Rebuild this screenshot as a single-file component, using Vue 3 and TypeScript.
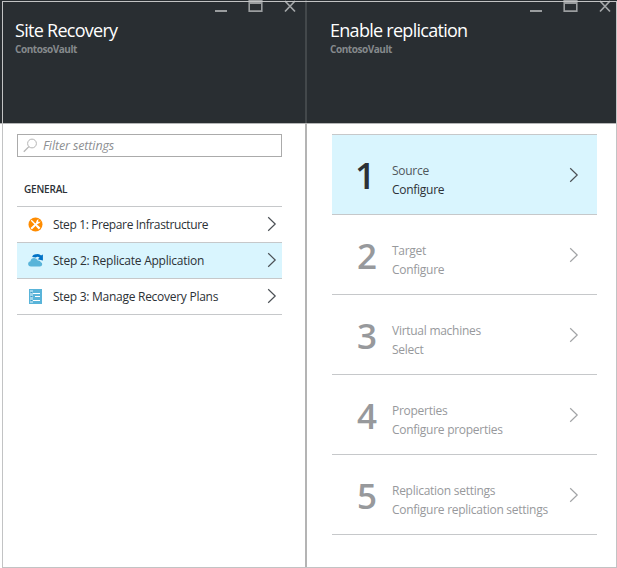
<script setup lang="ts">
interface Setting {
  id: string
  label: string
  icon: 'tools' | 'cloud' | 'plan'
  selected: boolean
}

interface Step {
  num: number
  title: string
  action: string
}

const settings: Setting[] = [
  { id: 'prepare', label: 'Step 1: Prepare Infrastructure', icon: 'tools', selected: false },
  { id: 'replicate', label: 'Step 2: Replicate Application', icon: 'cloud', selected: true },
  { id: 'plans', label: 'Step 3: Manage Recovery Plans', icon: 'plan', selected: false },
]

const steps: Step[] = [
  { num: 1, title: 'Source', action: 'Configure' },
  { num: 2, title: 'Target', action: 'Configure' },
  { num: 3, title: 'Virtual machines', action: 'Select' },
  { num: 4, title: 'Properties', action: 'Configure properties' },
  { num: 5, title: 'Replication settings', action: 'Configure replication settings' },
]

const activeStep = 1
</script>

<template>
  <div class="portal">
    <section class="blade blade-left">
      <header class="head">
        <div class="controls">
          <svg width="82" height="14" viewBox="0 0 82 14">
            <rect x="0" y="10" width="12" height="2" fill="#9a9d9f" />
            <path d="M33.4 0H47.6V12H33.4ZM35 4V10.3H46V4Z" fill="#9a9d9f" fill-rule="evenodd" />
            <path d="M70 1L80 11.5M80 1L70 11.5" stroke="#a3a6a8" stroke-width="1.7" />
          </svg>
        </div>
        <h1 class="title">Site Recovery</h1>
        <p class="sub">ContosoVault</p>
      </header>
      <div class="body">
        <div class="search">
          <svg width="16" height="16" viewBox="0 0 16 16" fill="none" stroke="#b5b5b5">
            <circle cx="9" cy="5.5" r="4.4" />
            <path d="M5.9 8.6L.8 13.8" stroke-width="1.3" />
          </svg>
          <span class="placeholder">Filter settings</span>
        </div>
        <h2 class="group">GENERAL</h2>
        <ul class="settings">
          <li v-for="s in settings" :key="s.id" class="setting" :class="[s.id, { selected: s.selected }]">
            <svg v-if="s.icon === 'tools'" class="icon" width="16" height="16" viewBox="0 0 16 16">
              <circle cx="7.5" cy="7.5" r="7" fill="#ff8c00" />
              <path d="M3.2 3.2L11 11" stroke="#fff" stroke-width="1.3" />
              <path d="M8.8 8.8L11.6 11.6" stroke="#fff" stroke-width="2.2" />
              <path d="M3.2 11.8L9.8 5.5" stroke="#fff" stroke-width="1.9" />
              <path d="M10.6 2.2Q7.8 3.2 8.3 6Q10.6 7.8 12.8 4.6L10.8 5L10 4.2Z" fill="#fff" />
            </svg>
            <svg v-else-if="s.icon === 'cloud'" class="icon" width="16" height="16" viewBox="0 0 16 16">
              <path d="M4.2 4Q5 .9 8 1.2Q11.4 .2 13 2.5L14.9 1.6V7.6L9.6 6.2L11.6 4.8Q9.8 3 7.8 4.4Z" fill="#0072c6" />
              <path d="M3 13.6Q.1 13.3 .1 10.8Q.2 8.5 2.4 8.3Q3.1 5 6.2 5Q8.8 5 9.8 7.5Q12.3 7.3 12.9 9.3Q14.4 9.8 14.2 11.6Q13.9 13.6 12 13.6Z" fill="#59b4d9" />
            </svg>
            <svg v-else class="icon" width="16" height="16" viewBox="0 0 16 16">
              <rect x="1" y="0" width="13" height="15" fill="#59b4d9" />
              <rect x="2" y="1" width="3" height="13" fill="#9ed5eb" />
              <path d="M2.5 3.5H4.5M2.5 7.5H4.5M2.5 11.5H4.5" stroke="#3999c6" />
              <path d="M5 4.5H12M7 7.5H12M5 11.5H12" stroke="#fff" stroke-width="1.2" />
            </svg>
            <span class="label">{{ s.label }}</span>
            <svg class="chevron" width="10" height="16" viewBox="0 0 10 16"><path d="M1.2 1.2L8.2 8L1.2 14.8" /></svg>
          </li>
        </ul>
      </div>
    </section>
    <div class="divider"></div>
    <section class="blade blade-right">
      <header class="head">
        <div class="controls">
          <svg width="82" height="14" viewBox="0 0 82 14">
            <rect x="0" y="10" width="12" height="2" fill="#9a9d9f" />
            <path d="M33.4 0H47.6V12H33.4ZM35 4V10.3H46V4Z" fill="#9a9d9f" fill-rule="evenodd" />
            <path d="M70 1L80 11.5M80 1L70 11.5" stroke="#a3a6a8" stroke-width="1.7" />
          </svg>
        </div>
        <h1 class="title">Enable replication</h1>
        <p class="sub">ContosoVault</p>
      </header>
      <ol class="steps">
        <li v-for="s in steps" :key="s.num" class="step" :class="{ active: s.num === activeStep }">
          <span class="num">{{ s.num }}</span>
          <div class="text">
            <span class="name">{{ s.title }}</span>
            <span class="action">{{ s.action }}</span>
          </div>
          <svg class="chevron" width="10" height="16" viewBox="0 0 10 16"><path d="M1.2 1.2L8.2 8L1.2 14.8" /></svg>
        </li>
      </ol>
    </section>
    <div class="frame"></div>
  </div>
</template>

<style>
body {
  margin: 0;
  background: #fff;
}
</style>

<style scoped>
.portal {
  position: relative;
  display: grid;
  grid-template-columns: 305px 2px 310px;
  width: 617px;
  height: 568px;
  overflow: hidden;
  font-family: "Open Sans", "Noto Sans", sans-serif;
  color: #2c3136;
}
.portal * {
  box-sizing: border-box;
}
.frame {
  position: absolute;
  inset: 1px 0 0 2px;
  border: 1px solid #c2c3c4;
  pointer-events: none;
}
.head {
  height: 124px;
  background: #292e32;
  border-bottom: 1px solid #b5b6b7;
  padding-left: 15px;
}
.blade-right .head {
  padding-left: 23px;
}
.controls {
  display: flex;
  justify-content: flex-end;
  height: 14px;
  padding-right: 8px;
}
.blade-right .controls {
  padding-right: 5px;
}
.title {
  margin: 3px 0 0;
  font-size: 18px;
  line-height: 26px;
  font-weight: 400;
  letter-spacing: -0.72px;
  color: #fff;
  white-space: nowrap;
}
.sub {
  margin: 0;
  font-size: 10px;
  line-height: 13px;
  font-weight: 700;
  letter-spacing: -0.45px;
  color: #85898c;
}
.divider {
  background: linear-gradient(#43484b 0 123px, #b4b4b4 123px);
}
.body {
  padding: 10px 23px 0 17px;
}
.search {
  display: flex;
  align-items: center;
  height: 23px;
  padding-left: 5px;
  border: 1px solid #ababab;
}
.placeholder {
  margin-left: 4px;
  font-size: 12.5px;
  font-style: italic;
  letter-spacing: -0.12px;
  color: #8d8f92;
}
.group {
  margin: 22px 0 0 7px;
  height: 27px;
  font-size: 10px;
  line-height: 20px;
  font-weight: 600;
  letter-spacing: -0.2px;
}
.settings,
.steps {
  margin: 0;
  padding: 0;
  list-style: none;
}
.settings {
  border-top: 1px solid #c6c8ca;
}
.setting {
  display: flex;
  align-items: center;
  height: 36px;
  padding: 0 5px 1px 11px;
  border-bottom: 1px solid #c6c8ca;
  font-size: 12px;
}
.icon {
  position: relative;
  top: 1px;
}
.selected,
.active {
  background: #d9f5fe;
}
.label {
  flex: 1;
  margin-left: 9px;
  padding-top: 1px;
  letter-spacing: -0.38px;
  white-space: nowrap;
}
.replicate .label {
  letter-spacing: -0.23px;
}
.plans .label {
  letter-spacing: -0.27px;
}
.chevron {
  flex: none;
  fill: none;
  stroke: #4b5055;
  stroke-width: 1.2;
}
.steps {
  margin: 10px 20px 0 25px;
  border-top: 1px solid #c6c8ca;
}
.step {
  display: flex;
  height: 80px;
  padding: 0 18px 0 25px;
  border-bottom: 1px solid #c6c8ca;
  color: #97999c;
}
.active {
  color: #2c3136;
}
.num {
  width: 35px;
  font-size: 36px;
  line-height: 82px;
  font-weight: 600;
  letter-spacing: -1px;
}
.step:not(.active) .num {
  font-size: 35px;
}
.active .num {
  text-indent: -2px;
}
.text {
  display: flex;
  flex: 1;
  flex-direction: column;
  padding-top: 26px;
  font-size: 12px;
  line-height: 19px;
  letter-spacing: -0.27px;
  white-space: nowrap;
}
.active .name {
  color: #50575c;
}
.step .chevron {
  margin-top: 32px;
  stroke: #a2a4a6;
}
.step.active .chevron {
  stroke: #4b5055;
}
</style>
